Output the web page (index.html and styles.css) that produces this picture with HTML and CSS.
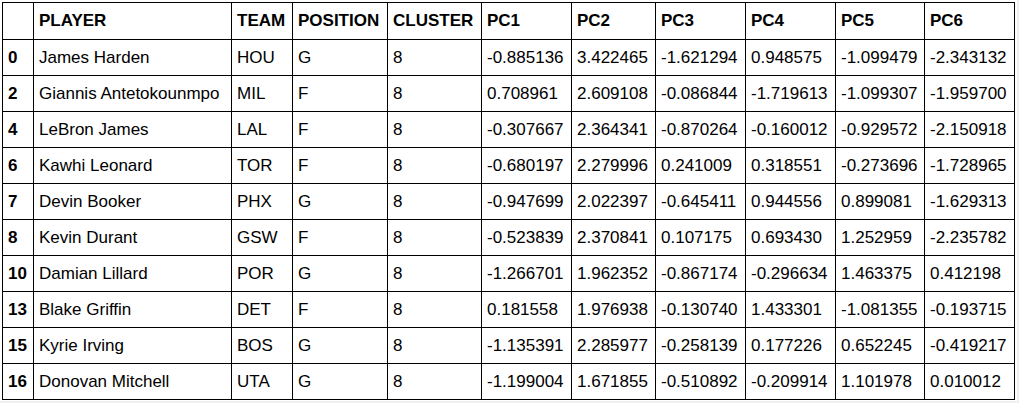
FILE: index.html
```html
<!DOCTYPE html>
<html>
<head>
<meta charset="utf-8">
<link rel="stylesheet" href="styles.css">
</head>
<body>
<div class="page">
<table class="df">
<colgroup>
<col class="c-idx"><col class="c-player"><col class="c-team"><col class="c-pos"><col class="c-cluster">
<col class="c-pc1"><col class="c-pc2"><col class="c-pc3"><col class="c-pc4"><col class="c-pc5"><col class="c-pc6">
</colgroup>
<thead>
<tr><th></th><th>PLAYER</th><th>TEAM</th><th>POSITION</th><th>CLUSTER</th><th>PC1</th><th>PC2</th><th>PC3</th><th>PC4</th><th>PC5</th><th>PC6</th></tr>
</thead>
<tbody>
<tr><th>0</th><td>James Harden</td><td>HOU</td><td>G</td><td>8</td><td>-0.885136</td><td>3.422465</td><td>-1.621294</td><td>0.948575</td><td>-1.099479</td><td>-2.343132</td></tr>
<tr><th>2</th><td>Giannis Antetokounmpo</td><td>MIL</td><td>F</td><td>8</td><td>0.708961</td><td>2.609108</td><td>-0.086844</td><td>-1.719613</td><td>-1.099307</td><td>-1.959700</td></tr>
<tr><th>4</th><td>LeBron James</td><td>LAL</td><td>F</td><td>8</td><td>-0.307667</td><td>2.364341</td><td>-0.870264</td><td>-0.160012</td><td>-0.929572</td><td>-2.150918</td></tr>
<tr><th>6</th><td>Kawhi Leonard</td><td>TOR</td><td>F</td><td>8</td><td>-0.680197</td><td>2.279996</td><td>0.241009</td><td>0.318551</td><td>-0.273696</td><td>-1.728965</td></tr>
<tr><th>7</th><td>Devin Booker</td><td>PHX</td><td>G</td><td>8</td><td>-0.947699</td><td>2.022397</td><td>-0.645411</td><td>0.944556</td><td>0.899081</td><td>-1.629313</td></tr>
<tr><th>8</th><td>Kevin Durant</td><td>GSW</td><td>F</td><td>8</td><td>-0.523839</td><td>2.370841</td><td>0.107175</td><td>0.693430</td><td>1.252959</td><td>-2.235782</td></tr>
<tr><th>10</th><td>Damian Lillard</td><td>POR</td><td>G</td><td>8</td><td>-1.266701</td><td>1.962352</td><td>-0.867174</td><td>-0.296634</td><td>1.463375</td><td>0.412198</td></tr>
<tr><th>13</th><td>Blake Griffin</td><td>DET</td><td>F</td><td>8</td><td>0.181558</td><td>1.976938</td><td>-0.130740</td><td>1.433301</td><td>-1.081355</td><td>-0.193715</td></tr>
<tr><th>15</th><td>Kyrie Irving</td><td>BOS</td><td>G</td><td>8</td><td>-1.135391</td><td>2.285977</td><td>-0.258139</td><td>0.177226</td><td>0.652245</td><td>-0.419217</td></tr>
<tr><th>16</th><td>Donovan Mitchell</td><td>UTA</td><td>G</td><td>8</td><td>-1.199004</td><td>1.671855</td><td>-0.510892</td><td>-0.209914</td><td>1.101978</td><td>0.010012</td></tr>
</tbody>
</table>
</div>
</body>
</html>
```

FILE: styles.css
```css
html, body {
  margin: 0;
  padding: 0;
  background: #f0f0f0;
}
.page {
  width: 1017px;
  height: 401px;
  background: #ffffff;
  padding: 2px 0 0 2px;
  box-sizing: border-box;
}
.df {
  border-collapse: collapse;
  table-layout: fixed;
  width: 1013px;
  font-family: "Liberation Sans", Arial, sans-serif;
  font-size: 17px;
  color: #000;
}
.df th, .df td {
  border: 1px solid #000;
  padding: 0 0 0 5px;
  height: 35px;
  text-align: left;
  vertical-align: middle;
  white-space: nowrap;
  overflow: hidden;
}
.df thead th { height: 36px; }
.df th { font-weight: bold; }
.c-idx { width: 31px; }
.c-player { width: 198px; }
.c-team { width: 61px; }
.c-pos { width: 95px; }
.c-cluster { width: 94px; }
.c-pc1 { width: 90px; }
.c-pc2 { width: 84px; }
.c-pc3 { width: 90px; }
.c-pc4 { width: 90px; }
.c-pc5 { width: 89px; }
.c-pc6 { width: 90px; }
```
